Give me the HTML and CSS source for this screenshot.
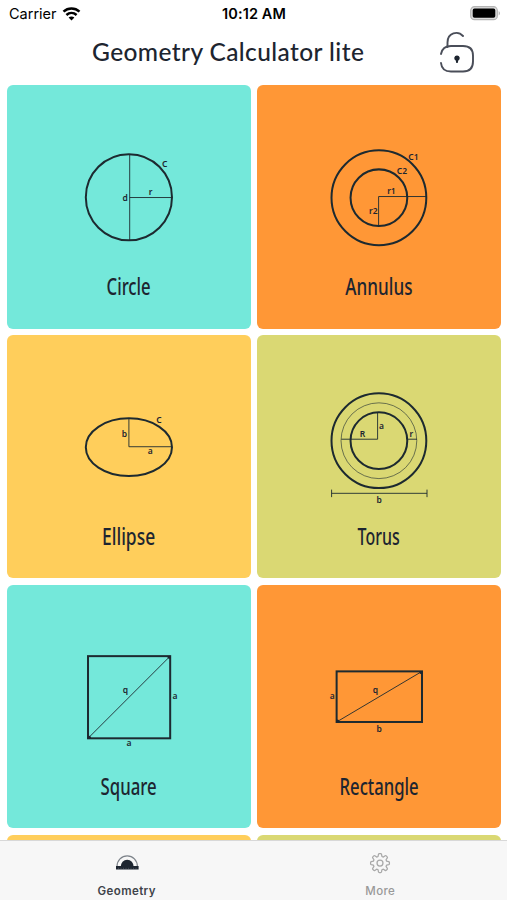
FILE: index.html
```html
<!DOCTYPE html>
<html lang="en">
<head>
    <meta charset="UTF-8">
    <meta name="viewport" content="width=device-width, initial-scale=1.0">
    <title>Geometry Calculator lite</title>
    <link rel="stylesheet" href="styles.css">
</head>
<body>
    <!-- Status bar -->
    <div class="status-bar">
        <div class="carrier">
            <span>Carrier</span>
            <svg class="wifi" viewBox="0 0 18 14">
                <path d="M1 4.700C5.600.5 12.400.5 17 4.700M3.900 8c3-2.700 7.200-2.700 10.200 0" fill="none" stroke="#000" stroke-width="2.500"/>
                <path d="M9 13.500l-2.900-3c1.700-1.400 4.100-1.400 5.800 0z"/>
            </svg>
        </div>
        <span class="clock">10:12 AM</span>
        <svg class="battery" viewBox="0 0 31 15">
            <rect x=".7" y=".7" width="26.600" height="13" rx="3.800" fill="#ddd" stroke="#b4b4b4" stroke-width="1.200"/>
            <rect x="2.700" y="2.600" width="22.600" height="9.200" rx="1.800"/>
            <path d="M28.700 5c1.700.7 1.700 3.700 0 4.400z" fill="#b4b4b4"/>
        </svg>
    </div>

    <header class="header">
        <h1>Geometry Calculator lite</h1>
        <svg class="lock" viewBox="0 0 36 42">
            <g fill="none" stroke="#4a4e59" stroke-width="1.900" stroke-linecap="round">
                <path d="M7.500 16V11.500C7.500 1.500 18-.5 23 5"/>
                <path d="M1 23C2 17.500 5.500 15 11 15H23c6.500 0 10 3.500 10 9.500v6c0 6.500-3.500 10-10 10H11c-6 0-9.500-3-10-8.500"/>
            </g>
            <path d="M17 24.500a2.700 2.700 0 0 1 1.300 5.100L17.700 32h-1.400l-.6-2.400A2.700 2.700 0 0 1 17 24.500z" fill="#1d2530"/>
        </svg>
    </header>

    <!-- Shapes -->
    <main class="shapes">
        <div class="card teal">
            <svg viewBox="0 0 243 243">
                <circle class="outline" cx="121.500" cy="112" r="43"/>
                <path class="thin" d="M122.300 69v86M122.300 112.300H164.500"/>
                <text class="mark" x="157.200" y="82">C</text>
                <text class="mark" x="143.200" y="109.700">r</text>
                <text class="mark" x="117.700" y="115.500">d</text>
                <text class="name" x="121.200" y="209.500" textLength="44" lengthAdjust="spacingAndGlyphs">Circle</text>
            </svg>
        </div>
        <div class="card orange">
            <svg viewBox="0 0 243 243">
                <circle class="outline" cx="121.500" cy="112.500" r="47.300"/>
                <circle class="outline" cx="121.500" cy="112.500" r="28.300"/>
                <path class="thin" d="M169.500 111.300H121.200V141"/>
                <text class="mark" x="156" y="74.500">C1</text>
                <text class="mark" x="144.500" y="89.200">C2</text>
                <text class="mark" x="134" y="109">r1</text>
                <text class="mark" x="116" y="129.200">r2</text>
                <text class="name" x="121.500" y="209.500" textLength="67" lengthAdjust="spacingAndGlyphs">Annulus</text>
            </svg>
        </div>
        <div class="card yellow">
            <svg viewBox="0 0 243 243">
                <ellipse class="outline" cx="121.500" cy="112" rx="43" ry="28.800"/>
                <path class="thin" d="M121.500 83.500v28H164.500"/>
                <text class="mark" x="151.500" y="88">C</text>
                <text class="mark" x="117" y="101.500">b</text>
                <text class="mark" x="142.700" y="119">a</text>
                <text class="name" x="121.200" y="209.500" textLength="53" lengthAdjust="spacingAndGlyphs">Ellipse</text>
            </svg>
        </div>
        <div class="card olive">
            <svg viewBox="0 0 243 243">
                <circle class="outline" cx="121.500" cy="105.500" r="47.300"/>
                <circle class="faint" cx="121.500" cy="105.500" r="37.800"/>
                <circle class="outline" cx="121.500" cy="105.500" r="28.300"/>
                <path class="thin" d="M84 104h36.200V77.500M150.500 104h9"/>
                <path class="thin" d="M74.300 158h95.200M74.300 154.300v7.500M169.500 154.300v7.500"/>
                <text class="mark" x="105" y="102">R</text>
                <text class="mark" x="124" y="93.500">a</text>
                <text class="mark" x="154" y="102.200">r</text>
                <text class="mark" x="121.700" y="167.200">b</text>
                <text class="name" x="121.200" y="209.500" textLength="42" lengthAdjust="spacingAndGlyphs">Torus</text>
            </svg>
        </div>
        <div class="card teal">
            <svg viewBox="0 0 243 243">
                <rect class="outline" x="80.700" y="71" width="82" height="82"/>
                <path class="thin" d="M80.700 153l82-82"/>
                <circle cx="82" cy="152" r="1.500"/>
                <circle cx="161.700" cy="72" r="1.500"/>
                <text class="mark" x="118" y="108.200">q</text>
                <text class="mark" x="167.500" y="114.200">a</text>
                <text class="mark" x="121.700" y="160.200">a</text>
                <text class="name" x="121.200" y="209.500" textLength="56" lengthAdjust="spacingAndGlyphs">Square</text>
            </svg>
        </div>
        <div class="card orange">
            <svg viewBox="0 0 243 243">
                <rect class="outline" x="79.300" y="86.200" width="85.200" height="50.500"/>
                <path class="thin" d="M79.300 136.700L164.500 86.200"/>
                <circle cx="80.300" cy="135.700" r="1.500"/>
                <circle cx="163.500" cy="87.200" r="1.500"/>
                <text class="mark" x="118" y="108.200">q</text>
                <text class="mark" x="75" y="114.200">a</text>
                <text class="mark" x="121.700" y="147">b</text>
                <text class="name" x="121.700" y="209.500" textLength="79" lengthAdjust="spacingAndGlyphs">Rectangle</text>
            </svg>
        </div>
        <div class="card yellow"></div>
        <div class="card olive"></div>
    </main>

    <!-- Tab bar -->
    <nav class="tab-bar">
        <div class="tab active">
            <svg viewBox="0 0 24 24">
                <path d="M2 15.500a10.200 10.700 0 0 1 20.400 0" fill="none" stroke="#7d838a" stroke-width="1.200"/>
                <path d="M5.700 16a6.500 7.300 0 0 1 13 0z"/>
                <rect x="1" y="15" width="22.600" height="3.500"/>
                <path d="M3 17.300h19" stroke="#5b626b" stroke-width=".7" stroke-dasharray="1 1.500"/>
            </svg>
            <span>Geometry</span>
        </div>
        <div class="tab">
            <svg viewBox="-.5 -.4 25 25">
                <g fill="none" stroke="#a8a8a8" stroke-width="1.300" stroke-linejoin="round">
                    <path d="M10 5.300l.4-2.200q.2-.7.900-.7h1.400q.7 0 .9.700l.4 2.200 1.500.6 1.900-1.300q.6-.4 1.100.1l1 1q.5.500.1 1.100l-1.300 1.900.6 1.500 2.200.4q.7.2.7.900v1.400q0 .7-.7.900l-2.200.4-.6 1.500 1.300 1.900q.4.600-.1 1.100l-1 1q-.5.500-1.100.1l-1.900-1.300-1.500.6-.4 2.200q-.2.700-.9.700h-1.400q-.7 0-.9-.7l-.4-2.200-1.500-.6-1.900 1.300q-.6.400-1.100-.1l-1-1q-.5-.5-.1-1.100l1.300-1.900-.6-1.500-2.200-.4q-.7-.2-.7-.9v-1.400q0-.7.700-.9l2.200-.4.600-1.500-1.300-1.900q-.4-.6.100-1.100l1-1q.5-.5 1.100-.1l1.900 1.300z"/>
                    <circle cx="12" cy="12.200" r="3.100"/>
                </g>
            </svg>
            <span>More</span>
        </div>
    </nav>
</body>
</html>
```
FILE: styles.css
```css
* {
    box-sizing: border-box;
}
body {
    margin: 0;
    height: 900px;
    overflow: hidden;
    display: flex;
    flex-direction: column;
    background: #fff;
    color: #1d2530;
    font-family: Inter, "Liberation Sans", sans-serif;
}
.status-bar {
    display: grid;
    grid-template-columns: 1fr auto 1fr;
    align-items: center;
    height: 27px;
    padding: 0 8px 0 9px;
    color: #000;
    font-size: 14.5px;
}
.carrier {
    display: flex;
    align-items: center;
    gap: 5px;
}
.wifi {
    width: 19px;
    height: 14px;
}
.clock {
    font-weight: 600;
    letter-spacing: 0.1px;
}
.battery {
    justify-self: end;
    width: 31px;
    height: 15px;
    margin-right: -2px;
}
.header {
    display: flex;
    align-items: center;
    justify-content: space-between;
    flex: none;
    height: 58px;
    padding: 0 31px 9px 92px;
}
.header h1 {
    margin: 0;
    font-family: Lato, sans-serif;
    font-size: 24.5px;
    font-weight: 500;
    letter-spacing: 0.4px;
    white-space: nowrap;
}
.lock {
    width: 36px;
    height: 42px;
}
.shapes {
    flex: 1;
    min-height: 0;
    overflow: hidden;
    display: grid;
    grid-template-columns: 1fr 1fr;
    grid-auto-rows: 243.5px;
    gap: 6.4px;
    padding: 0 6px 0 7px;
}
.card {
    border-radius: 6px;
    overflow: hidden;
}
.card svg {
    display: block;
    width: 100%;
    height: 100%;
    fill: #1d2530;
}
.teal {
    background: #74e8da;
}
.orange {
    background: #ff9736;
}
.yellow {
    background: #ffce5b;
}
.olive {
    background: #dad873;
}
.outline {
    fill: none;
    stroke: #1d2a30;
    stroke-width: 2;
}
.thin {
    fill: none;
    stroke: #1d2a30;
    stroke-width: 0.9;
}
.faint {
    fill: none;
    stroke: #1d2a30;
    stroke-width: 0.6;
}
.mark {
    font-family: "Noto Sans", sans-serif;
    font-size: 8.5px;
    font-weight: 600;
    text-anchor: middle;
}
.name {
    font-family: "Noto Sans", sans-serif;
    font-size: 22.5px;
    font-weight: 500;
    text-anchor: middle;
}
.tab-bar {
    display: flex;
    flex: none;
    height: 60px;
    background: #f7f7f7;
    border-top: 1px solid #d8d8d8;
}
.tab {
    flex: 1;
    display: flex;
    flex-direction: column;
    align-items: center;
    gap: 9px;
    padding-top: 10px;
    color: #999;
    font-size: 11.5px;
    font-weight: 500;
    letter-spacing: 0.4px;
}
.tab svg {
    width: 24px;
    height: 24px;
}
.tab.active {
    color: #3e434a;
    font-weight: 600;
}
.tab.active svg {
    fill: #1d2530;
}
```
